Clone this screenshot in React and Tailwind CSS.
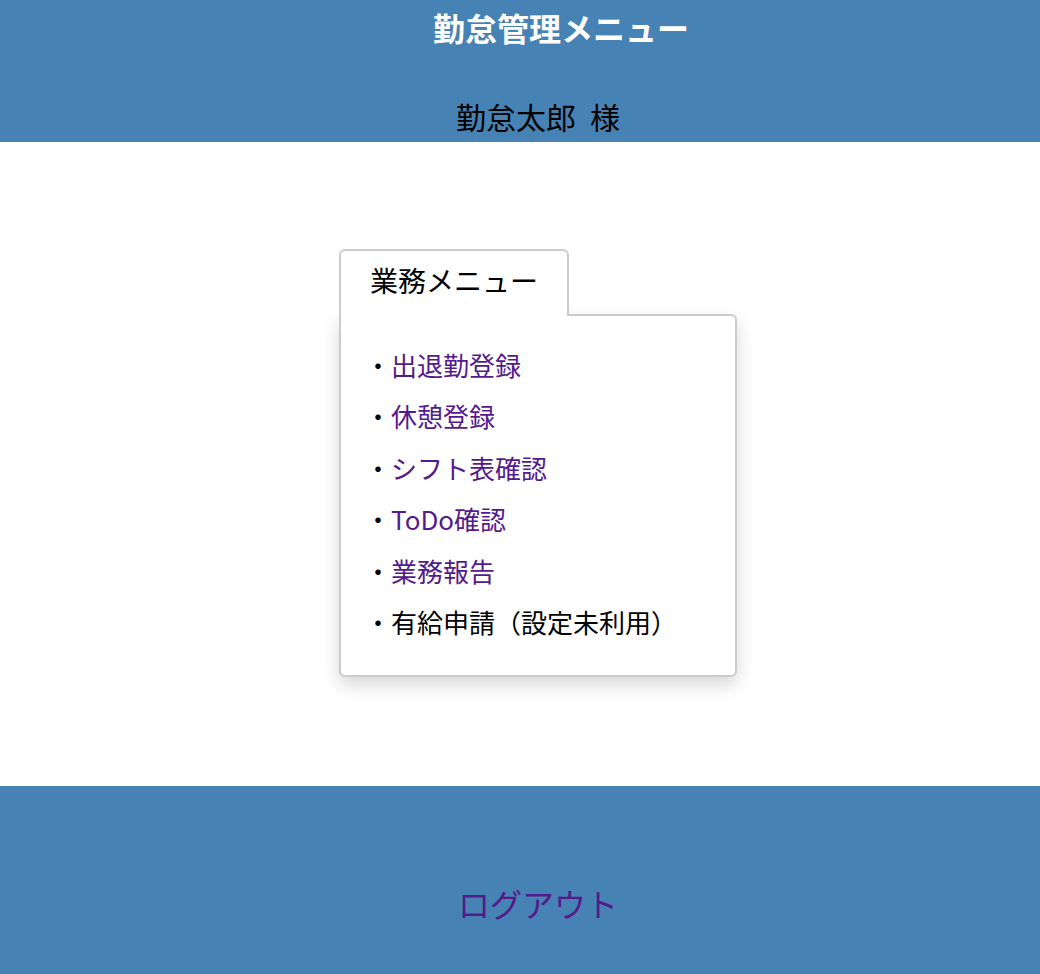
const menuItems = [
  { label: "出退勤登録", link: true },
  { label: "休憩登録", link: true },
  { label: "シフト表確認", link: true },
  { label: "ToDo確認", link: true },
  { label: "業務報告", link: true },
  { label: "有給申請（設定未利用）", link: false }
];

const App = () => {
  return <div className="min-h-[974px] flex flex-col bg-white text-black" style={{ fontFamily: '"Noto Sans CJK JP", "Noto Sans", sans-serif' }}>
      {/* header */}
      <header className="h-[142px] bg-[#4682b4] flex flex-col items-center">
        <h1 className="pl-[82px] h-[54px] leading-[54px] text-[32px] font-bold text-white">
          勤怠管理メニュー
        </h1>
        <div className="pl-[36px] mt-[42px] leading-[40px] text-[30px] flex gap-[14px]">
          <span>勤怠太郎</span>
          <span>様</span>
        </div>
      </header>

      {/* menu */}
      <main className="h-[644px] flex flex-col items-center pl-[36px] pt-[107px]">
        <div className="w-[398px]">
          <div className="relative z-10 -mb-[2px] inline-block bg-white border-2 border-b-0 border-[#cccccc] rounded-t-md px-[29px] h-[67px] leading-[58px] text-[28px]">
            業務メニュー
          </div>
          <div className="bg-white border-2 border-[#cccccc] rounded-md rounded-tl-none shadow-[0_8px_18px_rgba(0,0,0,0.16)] pl-[24px] pt-[23px] pb-[28px]">
            <ul>
              {menuItems.map(item => <li key={item.label} className="flex text-[26px] leading-[51.4px]">
                  <span>・</span>
                  {item.link ? <a href="#" className="text-[#551a8b]">{item.label}</a> : <span>{item.label}</span>}
                </li>)}
            </ul>
          </div>
        </div>
      </main>

      {/* footer */}
      <footer className="flex-1 bg-[#4682b4] flex justify-center pl-[36px] pt-[93px]">
        <a href="#" className="h-[48px] leading-[48px] text-[32px] text-[#551a8b]">ログアウト</a>
      </footer>
    </div>;
};

export default App;
